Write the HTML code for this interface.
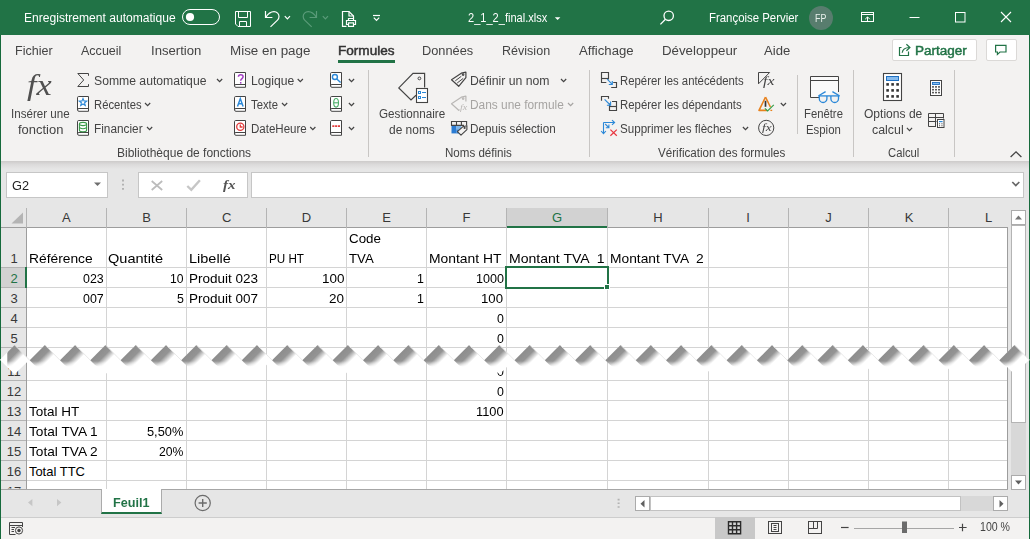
<!DOCTYPE html><html lang="fr"><head><meta charset="utf-8"><title>2_1_2_final.xlsx - Excel</title><style>
*{box-sizing:border-box;margin:0;padding:0}
html,body{width:1030px;height:539px;overflow:hidden;background:#e6e6e6;font-family:"Liberation Sans",sans-serif}
#app{position:relative;width:1030px;height:539px;overflow:hidden;background:#e6e6e6}
.abs{position:absolute}
.t{position:absolute;white-space:pre;transform-origin:0 0;font-family:"Liberation Sans",sans-serif}
#title{position:absolute;left:0;top:0;width:1030px;height:35px;background:#217346}
#tabs{position:absolute;left:0;top:35px;width:1030px;height:31px;background:#f3f2f1}
#ribbon{position:absolute;left:0;top:66px;width:1030px;height:95px;background:#f3f2f1}
#rshadow{position:absolute;left:0;top:161px;width:1030px;height:8px;background:linear-gradient(#cdcbca,#dcdbdb 45%,#e6e6e6)}
#fbar{position:absolute;left:0;top:169px;width:1030px;height:39px;background:#e6e6e6}
.box{position:absolute;background:#fff;border:1px solid #c6c6c6}
#grid{position:absolute;left:0;top:208px;width:1008px;height:281px;background:#fff;overflow:hidden}
.vl{position:absolute;width:1px;background:#d4d4d4}
.hl{position:absolute;height:1px;background:#d4d4d4}
.sep{position:absolute;width:1px;background:#c8c6c4}
#sheetbar{position:absolute;left:0;top:489px;width:1030px;height:28px;background:#e6e6e6}
#sheetbar:before{content:'';position:absolute;left:0;top:0;width:1008px;height:1px;background:#a6a6a6}
#status{position:absolute;left:0;top:517px;width:1030px;height:22px;background:#f3f2f1;border-top:1px solid #cdcdcd}
svg{position:absolute;overflow:visible}
.ov{left:0;top:0;pointer-events:none}
</style></head><body><div id="app">
<div id="title"></div><div id="tabs"></div><div id="ribbon"></div><div id="rshadow"></div><div id="fbar"></div>
<div id="grid">
<div class="abs" style="left:0;top:0;width:1008px;height:20px;background:#e6e6e6"></div>
<div class="abs" style="left:0;top:0;width:27px;height:281px;background:#e6e6e6"></div>
<div class="abs" style="left:507px;top:0;width:100px;height:20px;background:#d2d2d2;border-bottom:2px solid #217346"></div>
<div class="abs" style="left:0;top:60px;width:27px;height:19px;background:#d2d2d2;border-right:2px solid #217346"></div>
<div class="hl" style="left:0;top:19px;width:1008px;background:#9d9d9d"></div>
<div class="abs" style="left:507px;top:18px;width:100px;height:2px;background:#217346"></div>
<div class="vl" style="left:26px;top:0;height:20px;background:#b4b4b4"></div>
<div class="vl" style="left:26px;top:20px;height:261px"></div>
<div class="vl" style="left:106px;top:0;height:20px;background:#b4b4b4"></div>
<div class="vl" style="left:106px;top:20px;height:261px"></div>
<div class="vl" style="left:186px;top:0;height:20px;background:#b4b4b4"></div>
<div class="vl" style="left:186px;top:20px;height:261px"></div>
<div class="vl" style="left:266px;top:0;height:20px;background:#b4b4b4"></div>
<div class="vl" style="left:266px;top:20px;height:261px"></div>
<div class="vl" style="left:346px;top:0;height:20px;background:#b4b4b4"></div>
<div class="vl" style="left:346px;top:20px;height:261px"></div>
<div class="vl" style="left:426px;top:0;height:20px;background:#b4b4b4"></div>
<div class="vl" style="left:426px;top:20px;height:261px"></div>
<div class="vl" style="left:506px;top:0;height:20px;background:#b4b4b4"></div>
<div class="vl" style="left:506px;top:20px;height:261px"></div>
<div class="vl" style="left:607px;top:0;height:20px;background:#b4b4b4"></div>
<div class="vl" style="left:607px;top:20px;height:261px"></div>
<div class="vl" style="left:708px;top:0;height:20px;background:#b4b4b4"></div>
<div class="vl" style="left:708px;top:20px;height:261px"></div>
<div class="vl" style="left:788px;top:0;height:20px;background:#b4b4b4"></div>
<div class="vl" style="left:788px;top:20px;height:261px"></div>
<div class="vl" style="left:868px;top:0;height:20px;background:#b4b4b4"></div>
<div class="vl" style="left:868px;top:20px;height:261px"></div>
<div class="vl" style="left:948px;top:0;height:20px;background:#b4b4b4"></div>
<div class="vl" style="left:948px;top:20px;height:261px"></div>
<div class="vl" style="left:26px;top:20px;height:261px;background:#9d9d9d"></div>
<div class="hl" style="left:0;top:59px;width:26px;background:#b4b4b4"></div>
<div class="hl" style="left:27px;top:59px;width:981px"></div>
<div class="hl" style="left:0;top:79px;width:26px;background:#b4b4b4"></div>
<div class="hl" style="left:27px;top:79px;width:981px"></div>
<div class="hl" style="left:0;top:99px;width:26px;background:#b4b4b4"></div>
<div class="hl" style="left:27px;top:99px;width:981px"></div>
<div class="hl" style="left:0;top:119px;width:26px;background:#b4b4b4"></div>
<div class="hl" style="left:27px;top:119px;width:981px"></div>
<div class="hl" style="left:0;top:139px;width:26px;background:#b4b4b4"></div>
<div class="hl" style="left:27px;top:139px;width:981px"></div>
<div class="hl" style="left:0;top:172px;width:26px;background:#b4b4b4"></div>
<div class="hl" style="left:27px;top:172px;width:981px"></div>
<div class="hl" style="left:0;top:192px;width:26px;background:#b4b4b4"></div>
<div class="hl" style="left:27px;top:192px;width:981px"></div>
<div class="hl" style="left:0;top:212px;width:26px;background:#b4b4b4"></div>
<div class="hl" style="left:27px;top:212px;width:981px"></div>
<div class="hl" style="left:0;top:232px;width:26px;background:#b4b4b4"></div>
<div class="hl" style="left:27px;top:232px;width:981px"></div>
<div class="hl" style="left:0;top:252px;width:26px;background:#b4b4b4"></div>
<div class="hl" style="left:27px;top:252px;width:981px"></div>
<div class="hl" style="left:0;top:272px;width:26px;background:#b4b4b4"></div>
<div class="hl" style="left:27px;top:272px;width:981px"></div>
<div class="abs" style="left:0;top:60px;width:26px;height:19px;background:#d2d2d2"></div>
<div class="abs" style="left:25px;top:59px;width:2px;height:21px;background:#217346"></div>
<svg style="left:11px;top:4px" width="13" height="12"><path d="M12 0.5V11.5H0.5Z" fill="#b4b4b4"/></svg>
</div>
<span class="t" style="left:28.9px;top:250px;font-size:13.0px;line-height:17px;color:#000;transform:scaleX(1.062);">Référence</span>
<span class="t" style="left:108.4px;top:250px;font-size:13.0px;line-height:17px;color:#000;transform:scaleX(1.119);">Quantité</span>
<span class="t" style="left:188.8px;top:250px;font-size:13.0px;line-height:17px;color:#000;transform:scaleX(1.115);">Libellé</span>
<span class="t" style="left:269.4px;top:250px;font-size:13.0px;line-height:17px;color:#000;transform:scaleX(0.897);">PU HT</span>
<span class="t" style="left:349.3px;top:230px;font-size:13.0px;line-height:17px;color:#000;transform:scaleX(1.026);">Code</span>
<span class="t" style="left:349.3px;top:250px;font-size:13.0px;line-height:17px;color:#000;transform:scaleX(1.015);">TVA</span>
<span class="t" style="left:429.2px;top:250px;font-size:13.0px;line-height:17px;color:#000;transform:scaleX(1.066);">Montant HT</span>
<span class="t" style="left:508.9px;top:250px;font-size:13.0px;line-height:17px;color:#000;transform:scaleX(1.080);">Montant TVA  1</span>
<span class="t" style="left:610.2px;top:250px;font-size:13.0px;line-height:17px;color:#000;transform:scaleX(1.060);">Montant TVA  2</span>
<span class="t" style="left:83.2px;top:270px;font-size:13.0px;line-height:17px;color:#000;transform:scaleX(0.954);">023</span>
<span class="t" style="left:169.9px;top:270px;font-size:13.0px;line-height:17px;color:#000;transform:scaleX(0.933);">10</span>
<span class="t" style="left:189.4px;top:270px;font-size:13.0px;line-height:17px;color:#000;transform:scaleX(1.038);">Produit 023</span>
<span class="t" style="left:321.9px;top:270px;font-size:13.0px;line-height:17px;color:#000;transform:scaleX(1.037);">100</span>
<span class="t" style="left:417.0px;top:270px;font-size:13.0px;line-height:17px;color:#000;transform:scaleX(0.950);">1</span>
<span class="t" style="left:476.0px;top:270px;font-size:13.0px;line-height:17px;color:#000;transform:scaleX(0.968);">1000</span>
<span class="t" style="left:83.2px;top:290px;font-size:13.0px;line-height:17px;color:#000;transform:scaleX(0.954);">007</span>
<span class="t" style="left:177.0px;top:290px;font-size:13.0px;line-height:17px;color:#000;transform:scaleX(0.950);">5</span>
<span class="t" style="left:189.4px;top:290px;font-size:13.0px;line-height:17px;color:#000;transform:scaleX(1.038);">Produit 007</span>
<span class="t" style="left:329.4px;top:290px;font-size:13.0px;line-height:17px;color:#000;transform:scaleX(1.037);">20</span>
<span class="t" style="left:417.0px;top:290px;font-size:13.0px;line-height:17px;color:#000;transform:scaleX(0.950);">1</span>
<span class="t" style="left:481.4px;top:290px;font-size:13.0px;line-height:17px;color:#000;transform:scaleX(1.014);">100</span>
<span class="t" style="left:497.0px;top:310px;font-size:13.0px;line-height:17px;color:#000;transform:scaleX(0.950);">0</span>
<span class="t" style="left:497.0px;top:330px;font-size:13.0px;line-height:17px;color:#000;transform:scaleX(0.950);">0</span>
<span class="t" style="left:497.0px;top:363px;font-size:13.0px;line-height:17px;color:#000;transform:scaleX(0.950);">0</span>
<span class="t" style="left:497.0px;top:383px;font-size:13.0px;line-height:17px;color:#000;transform:scaleX(0.950);">0</span>
<span class="t" style="left:28.9px;top:403px;font-size:13.0px;line-height:17px;color:#000;transform:scaleX(1.039);">Total HT</span>
<span class="t" style="left:476.4px;top:403px;font-size:13.0px;line-height:17px;color:#000;transform:scaleX(0.987);">1100</span>
<span class="t" style="left:28.9px;top:423px;font-size:13.0px;line-height:17px;color:#000;transform:scaleX(1.052);">Total TVA 1</span>
<span class="t" style="left:147.1px;top:423px;font-size:13.0px;line-height:17px;color:#000;transform:scaleX(0.984);">5,50%</span>
<span class="t" style="left:28.9px;top:443px;font-size:13.0px;line-height:17px;color:#000;transform:scaleX(1.052);">Total TVA 2</span>
<span class="t" style="left:159.0px;top:443px;font-size:13.0px;line-height:17px;color:#000;transform:scaleX(0.937);">20%</span>
<span class="t" style="left:28.9px;top:463px;font-size:13.0px;line-height:17px;color:#000;transform:scaleX(1.000);">Total TTC</span>
<span class="t" style="left:56.4px;top:208px;width:20px;text-align:center;font-size:13px;line-height:20px;color:#383838">A</span>
<span class="t" style="left:136.5px;top:208px;width:20px;text-align:center;font-size:13px;line-height:20px;color:#383838">B</span>
<span class="t" style="left:216.8px;top:208px;width:20px;text-align:center;font-size:13px;line-height:20px;color:#383838">C</span>
<span class="t" style="left:296.5px;top:208px;width:20px;text-align:center;font-size:13px;line-height:20px;color:#383838">D</span>
<span class="t" style="left:376.5px;top:208px;width:20px;text-align:center;font-size:13px;line-height:20px;color:#383838">E</span>
<span class="t" style="left:456.5px;top:208px;width:20px;text-align:center;font-size:13px;line-height:20px;color:#383838">F</span>
<span class="t" style="left:547.0px;top:208px;width:20px;text-align:center;font-size:13px;line-height:20px;color:#217346">G</span>
<span class="t" style="left:648.0px;top:208px;width:20px;text-align:center;font-size:13px;line-height:20px;color:#383838">H</span>
<span class="t" style="left:738.0px;top:208px;width:20px;text-align:center;font-size:13px;line-height:20px;color:#383838">I</span>
<span class="t" style="left:818.6px;top:208px;width:20px;text-align:center;font-size:13px;line-height:20px;color:#383838">J</span>
<span class="t" style="left:899.0px;top:208px;width:20px;text-align:center;font-size:13px;line-height:20px;color:#383838">K</span>
<span class="t" style="left:978.7px;top:208px;width:20px;text-align:center;font-size:13px;line-height:20px;color:#383838">L</span>
<span class="t" style="left:2px;top:249px;width:24px;text-align:center;font-size:13px;line-height:20px;color:#383838;transform:scaleX(1.0);transform-origin:50% 0">1</span>
<span class="t" style="left:2px;top:269px;width:24px;text-align:center;font-size:13px;line-height:20px;color:#217346;transform:scaleX(1.0);transform-origin:50% 0">2</span>
<span class="t" style="left:2px;top:289px;width:24px;text-align:center;font-size:13px;line-height:20px;color:#383838;transform:scaleX(1.0);transform-origin:50% 0">3</span>
<span class="t" style="left:2px;top:309px;width:24px;text-align:center;font-size:13px;line-height:20px;color:#383838;transform:scaleX(1.0);transform-origin:50% 0">4</span>
<span class="t" style="left:2px;top:329px;width:24px;text-align:center;font-size:13px;line-height:20px;color:#383838;transform:scaleX(1.0);transform-origin:50% 0">5</span>
<span class="t" style="left:2px;top:362px;width:24px;text-align:center;font-size:13px;line-height:20px;color:#383838;transform:scaleX(1.0);transform-origin:50% 0">11</span>
<span class="t" style="left:2px;top:382px;width:24px;text-align:center;font-size:13px;line-height:20px;color:#383838;transform:scaleX(1.0);transform-origin:50% 0">12</span>
<span class="t" style="left:2px;top:402px;width:24px;text-align:center;font-size:13px;line-height:20px;color:#383838;transform:scaleX(1.0);transform-origin:50% 0">13</span>
<span class="t" style="left:2px;top:422px;width:24px;text-align:center;font-size:13px;line-height:20px;color:#383838;transform:scaleX(1.0);transform-origin:50% 0">14</span>
<span class="t" style="left:2px;top:442px;width:24px;text-align:center;font-size:13px;line-height:20px;color:#383838;transform:scaleX(1.0);transform-origin:50% 0">15</span>
<span class="t" style="left:2px;top:462px;width:24px;text-align:center;font-size:13px;line-height:20px;color:#383838;transform:scaleX(1.0);transform-origin:50% 0">16</span>
<span class="t" style="left:2px;top:482px;width:24px;text-align:center;font-size:13px;line-height:20px;color:#383838;clip-path:inset(0 0 13.5px 0);transform:scaleX(1.0);transform-origin:50% 0">17</span>
<div class="abs" style="left:505px;top:266px;width:104px;height:23px;border:2px solid #217346"></div>
<div class="abs" style="left:604px;top:284px;width:6px;height:6px;background:#217346;border:1px solid #fff"></div>
<div class="abs" style="left:1007px;top:227px;width:1px;height:263px;background:#9d9d9d"></div>
<div class="abs" style="left:1008px;top:208px;width:22px;height:282px;background:#e6e6e6"></div>
<div class="abs" style="left:1011px;top:226px;width:15px;height:250px;background:#d8d8d8"></div>
<div class="box" style="left:1011px;top:225px;width:15px;height:198px;border-color:#b4b4b4"></div>
<div class="box" style="left:1011px;top:210px;width:15px;height:15px;border-color:#ababab"></div>
<svg style="left:1015px;top:214.6px" width="8" height="5"><path d="M0 4.5L3.5 0.5L7 4.5Z" fill="#777"/></svg>
<div id="sheetbar"></div><div id="status"></div>
<div class="box" style="left:1011px;top:475px;width:15px;height:15px;border-color:#ababab"></div>
<svg style="left:1015px;top:480px" width="8" height="5"><path d="M0 0.5L3.5 4.5L7 0.5Z" fill="#606060"/></svg>
<div class="abs" style="left:101px;top:489px;width:61px;height:25px;background:#fff;border-left:1px solid #ababab;border-right:1px solid #ababab;border-bottom:2.3px solid #217346"></div>
<div class="abs" style="left:635px;top:496px;width:373px;height:15px;background:#d8d8d8"></div>
<div class="box" style="left:635px;top:496px;width:15px;height:15px;border-color:#ababab"></div>
<div class="box" style="left:650px;top:496px;width:311px;height:15px;border-color:#c2c2c2"></div>
<div class="box" style="left:993px;top:496px;width:15px;height:15px;border-color:#ababab"></div>
<svg style="left:640px;top:499.6px" width="5" height="8"><path d="M4.5 0L0.5 3.7L4.5 7.4Z" fill="#606060"/></svg>
<svg style="left:999px;top:499.6px" width="5" height="8"><path d="M0.5 0L4.5 3.7L0.5 7.4Z" fill="#606060"/></svg>
<div class="abs" style="left:715px;top:517px;width:40px;height:22px;background:#c8c8c8"></div>
<div class="box" style="left:6px;top:172px;width:102px;height:26px"></div>
<div class="box" style="left:138px;top:172px;width:110px;height:26px"></div>
<div class="box" style="left:251px;top:172px;width:773px;height:26px"></div>
<div class="abs" style="left:338px;top:60px;width:57px;height:2.5px;background:#217346"></div>
<div class="box" style="left:892px;top:38.6px;width:84.6px;height:22.8px;border-color:#dbd9d7;border-radius:2px"></div>
<div class="box" style="left:985.6px;top:38.6px;width:31px;height:22.8px;border-color:#dbd9d7;border-radius:2px"></div>
<div class="sep" style="left:368px;top:70px;height:86.5px"></div>
<div class="sep" style="left:589px;top:70px;height:86.5px"></div>
<div class="sep" style="left:797px;top:75px;height:59px"></div>
<div class="sep" style="left:853px;top:70px;height:86.5px"></div>
<div class="sep" style="left:954px;top:70px;height:86.5px"></div>
<div class="abs" style="left:809px;top:5.8px;width:24px;height:24px;border-radius:50%;background:#587d6e"></div>
<span class="t" style="left:23.7px;top:10px;font-size:12.3px;line-height:16px;color:#fff;transform:scaleX(0.982);">Enregistrement automatique</span>
<span class="t" style="left:468.4px;top:10px;font-size:12.3px;line-height:16px;color:#fff;transform:scaleX(0.899);">2_1_2_final.xlsx</span>
<span class="t" style="left:708.9px;top:10px;font-size:12.3px;line-height:16px;color:#fff;transform:scaleX(0.927);">Françoise Pervier</span>
<span class="t" style="left:814.9px;top:12px;font-size:10.4px;line-height:13px;color:#e9f0ec;transform:scaleX(0.851);">FP</span>
<span class="t" style="left:14.6px;top:43px;font-size:12.3px;line-height:16px;color:#444444;transform:scaleX(1.019);">Fichier</span>
<span class="t" style="left:80.7px;top:43px;font-size:12.3px;line-height:16px;color:#444444;transform:scaleX(1.019);">Accueil</span>
<span class="t" style="left:150.9px;top:43px;font-size:12.3px;line-height:16px;color:#444444;transform:scaleX(1.066);">Insertion</span>
<span class="t" style="left:229.7px;top:43px;font-size:12.3px;line-height:16px;color:#444444;transform:scaleX(1.090);">Mise en page</span>
<span class="t" style="left:421.9px;top:43px;font-size:12.3px;line-height:16px;color:#444444;transform:scaleX(1.040);">Données</span>
<span class="t" style="left:501.9px;top:43px;font-size:12.3px;line-height:16px;color:#444444;transform:scaleX(1.020);">Révision</span>
<span class="t" style="left:578.8px;top:43px;font-size:12.3px;line-height:16px;color:#444444;transform:scaleX(1.069);">Affichage</span>
<span class="t" style="left:661.7px;top:43px;font-size:12.3px;line-height:16px;color:#444444;transform:scaleX(1.078);">Développeur</span>
<span class="t" style="left:764.4px;top:43px;font-size:12.3px;line-height:16px;color:#444444;transform:scaleX(1.064);">Aide</span>
<span class="t" style="left:337.8px;top:43px;font-size:12.3px;line-height:16px;color:#333;transform:scaleX(1.104);-webkit-text-stroke:.45px #333;">Formules</span>
<span class="t" style="left:915.1px;top:43px;font-size:12.3px;line-height:16px;color:#217346;transform:scaleX(1.098);-webkit-text-stroke:.45px #217346;">Partager</span>
<span class="t" style="left:10.8px;top:106px;font-size:12.3px;line-height:16px;color:#444444;transform:scaleX(0.942);">Insérer une</span>
<span class="t" style="left:17.6px;top:122px;font-size:12.3px;line-height:16px;color:#444444;transform:scaleX(1.054);">fonction</span>
<span class="t" style="left:93.8px;top:73px;font-size:12.3px;line-height:16px;color:#444444;transform:scaleX(0.991);">Somme automatique</span>
<span class="t" style="left:93.8px;top:97px;font-size:12.3px;line-height:16px;color:#444444;transform:scaleX(0.916);">Récentes</span>
<span class="t" style="left:93.8px;top:121px;font-size:12.3px;line-height:16px;color:#444444;transform:scaleX(0.961);">Financier</span>
<span class="t" style="left:251.2px;top:73px;font-size:12.3px;line-height:16px;color:#444444;transform:scaleX(0.987);">Logique</span>
<span class="t" style="left:251.2px;top:97px;font-size:12.3px;line-height:16px;color:#444444;transform:scaleX(0.918);">Texte</span>
<span class="t" style="left:251.2px;top:121px;font-size:12.3px;line-height:16px;color:#444444;transform:scaleX(0.938);">DateHeure</span>
<span class="t" style="left:116.8px;top:145px;font-size:12.3px;line-height:16px;color:#444444;transform:scaleX(0.976);">Bibliothèque de fonctions</span>
<span class="t" style="left:379.2px;top:106px;font-size:12.3px;line-height:16px;color:#444444;transform:scaleX(0.949);">Gestionnaire</span>
<span class="t" style="left:389.4px;top:122px;font-size:12.3px;line-height:16px;color:#444444;transform:scaleX(0.971);">de noms</span>
<span class="t" style="left:470.2px;top:73px;font-size:12.3px;line-height:16px;color:#444444;transform:scaleX(0.994);">Définir un nom</span>
<span class="t" style="left:470.2px;top:97px;font-size:12.3px;line-height:16px;color:#a6a4a2;transform:scaleX(0.967);">Dans une formule</span>
<span class="t" style="left:470.2px;top:121px;font-size:12.3px;line-height:16px;color:#444444;transform:scaleX(0.949);">Depuis sélection</span>
<span class="t" style="left:445.0px;top:145px;font-size:12.3px;line-height:16px;color:#444444;transform:scaleX(0.941);">Noms définis</span>
<span class="t" style="left:620.2px;top:73px;font-size:12.3px;line-height:16px;color:#444444;transform:scaleX(0.923);">Repérer les antécédents</span>
<span class="t" style="left:620.2px;top:97px;font-size:12.3px;line-height:16px;color:#444444;transform:scaleX(0.927);">Repérer les dépendants</span>
<span class="t" style="left:620.2px;top:121px;font-size:12.3px;line-height:16px;color:#444444;transform:scaleX(0.944);">Supprimer les flèches</span>
<span class="t" style="left:657.6px;top:145px;font-size:12.3px;line-height:16px;color:#444444;transform:scaleX(0.945);">Vérification des formules</span>
<span class="t" style="left:804.0px;top:106px;font-size:12.3px;line-height:16px;color:#444444;transform:scaleX(0.918);">Fenêtre</span>
<span class="t" style="left:806.1px;top:122px;font-size:12.3px;line-height:16px;color:#444444;transform:scaleX(0.925);">Espion</span>
<span class="t" style="left:864.1px;top:106px;font-size:12.3px;line-height:16px;color:#444444;transform:scaleX(0.980);">Options de</span>
<span class="t" style="left:871.7px;top:122px;font-size:12.3px;line-height:16px;color:#444444;transform:scaleX(1.008);">calcul</span>
<span class="t" style="left:888.1px;top:145px;font-size:12.3px;line-height:16px;color:#444444;transform:scaleX(0.916);">Calcul</span>
<span class="t" style="left:12.4px;top:177px;font-size:13.0px;line-height:17px;color:#222;transform:scaleX(0.980);">G2</span>
<span class="t" style="left:980.4px;top:519px;font-size:12.3px;line-height:16px;color:#444444;transform:scaleX(0.860);">100 %</span>
<span class="t" style="left:113.4px;top:495px;font-size:12.3px;line-height:16px;color:#217346;transform:scaleX(1.027);font-weight:bold;">Feuil1</span>
<span class="t" style="left:27.1px;top:68px;font-size:29px;line-height:34px;color:#505050;transform:scaleX(1.180);font-family:'Liberation Serif',serif;font-style:italic;">fx</span>
<span class="t" style="left:222.7px;top:176px;font-size:13.5px;line-height:17px;color:#555;transform:scaleX(1.111);font-family:'Liberation Serif',serif;font-style:italic;font-weight:bold;">fx</span>
<span class="t" style="left:763.0px;top:72px;font-size:13px;line-height:17px;color:#444;transform:scaleX(1.214);font-family:'Liberation Serif',serif;font-style:italic;">fx</span>
<span class="t" style="left:762.0px;top:121px;font-size:10.5px;line-height:13px;color:#444;transform:scaleX(1.267);font-family:'Liberation Serif',serif;font-style:italic;">fx</span>
<span class="t" style="left:459.7px;top:101px;font-size:9px;line-height:12px;color:#b9b7b5;transform:scaleX(1.123);font-family:'Liberation Serif',serif;font-style:italic;">fx</span>
<svg class="ov" width="1030" height="539" viewBox="0 0 1030 539" fill="none" stroke-linecap="butt" stroke-linejoin="miter"><g stroke="#fff" stroke-width="1" fill="none"><rect x="182.5" y="9.5" width="37" height="15" rx="7.5"/><circle cx="190" cy="17" r="4.1" fill="#fff" stroke="none"/><path d="M235.5 11.5H250.5V26.5H238L235.5 24Z"/><path d="M238.5 11.5V17.5H247.5V11.5"/><path d="M239.5 26.5V21.5H246.5V26.5"/><g stroke-width="1.2"><path d="M265.5 11V17.5H272.4"/><path d="M265.8 17.4C268 13.6 271 11.6 274 11.6C277 11.6 279 14 279 16.4C279 18 278.4 19.2 277.5 20.1L270.5 26.9"/></g><path d="M284.8 16.2L287.4 18.9L290.0 16.2" stroke="#fff" stroke-width="1.2" fill="none"/><g stroke="#5a9b79" stroke-width="1.2"><path d="M316.5 11V17.5H309.6"/><path d="M316.4 17.4C314.2 13.6 311.2 11.6 308.2 11.6C305.2 11.6 303.2 14 303.2 16.4C303.2 18 303.8 19.2 304.7 20.1L311.7 26.9"/></g><path d="M322.8 16.2L325.4 18.9L328.0 16.2" stroke="#5a9b79" stroke-width="1.2" fill="none"/><g stroke-width="1.2"><path d="M346.5 26.4H342.5V11.5H349L353.5 16V18.5"/><path d="M349 11.5V16H353.5" /><path d="M348.5 24.5H346.5V20.5H355.5V24.5H353.5"/><path d="M348.5 20.5V18.5H353.5V20.5"/><rect x="348.5" y="22.9" width="5" height="3.5"/></g><path d="M373 15.5H380" stroke-width="1.2"/><path d="M373.8 17.6L376.5 20.4L379.2 17.6" stroke="#fff" stroke-width="1.2" fill="none"/><path d="M554.8 17.3H560.4L557.6 20.1Z" fill="#fff" stroke="none"/><g stroke-width="1.3"><circle cx="668.7" cy="15.8" r="4.7"/><path d="M665.4 19.2L660.4 24.4"/></g><rect x="861.5" y="12.5" width="12" height="9"/><path d="M861.5 14.5H873.5"/><path d="M867.5 21.5V17M865.2 19.2L867.5 16.9L869.8 19.2"/><path d="M909.5 17.5H919.5"/><rect x="955.5" y="12.5" width="9.5" height="9.5"/><path d="M1001 12L1011 22M1011 12L1001 22" stroke-width="1.1"/></g><g stroke="#217346" stroke-width="1.2" fill="none"><path d="M901.5 47.5H899.5V55.5H908.5V51.5"/><path d="M902.2 52.8C902.6 49.5 905 47.6 909.6 47.5"/><path d="M906.4 44.3L909.9 47.5L906.4 50.7"/><path d="M995.6 45.4H1006V52H1000L997.4 54.4V52H995.6Z"/></g><path d="M88.5 75.8V73.5H77.8L83.7 80L77.8 86.5H88.5V84.2" stroke="#444444" stroke-width="1"/><g transform="translate(77.0 96.0)" stroke="#444444" stroke-width="1"><path d="M1.7 .5H11.5V15.3H2A1.5 1.5 0 0 1 .5 13.8V1.7A1.2 1.2 0 0 1 1.7 .5Z" fill="#fff"/><path d="M.5 13.8A1.5 1.5 0 0 1 2 12.5H11.5"/></g><g transform="translate(77.0 120.0)" stroke="#444444" stroke-width="1"><path d="M1.7 .5H11.5V15.3H2A1.5 1.5 0 0 1 .5 13.8V1.7A1.2 1.2 0 0 1 1.7 .5Z" fill="#fff"/><path d="M.5 13.8A1.5 1.5 0 0 1 2 12.5H11.5"/></g><g transform="translate(234.0 72.0)" stroke="#444444" stroke-width="1"><path d="M1.7 .5H11.5V15.3H2A1.5 1.5 0 0 1 .5 13.8V1.7A1.2 1.2 0 0 1 1.7 .5Z" fill="#fff"/><path d="M.5 13.8A1.5 1.5 0 0 1 2 12.5H11.5"/></g><g transform="translate(330.0 72.0)" stroke="#444444" stroke-width="1"><path d="M1.7 .5H11.5V15.3H2A1.5 1.5 0 0 1 .5 13.8V1.7A1.2 1.2 0 0 1 1.7 .5Z" fill="#fff"/><path d="M.5 13.8A1.5 1.5 0 0 1 2 12.5H11.5"/></g><g transform="translate(234.0 96.0)" stroke="#444444" stroke-width="1"><path d="M1.7 .5H11.5V15.3H2A1.5 1.5 0 0 1 .5 13.8V1.7A1.2 1.2 0 0 1 1.7 .5Z" fill="#fff"/><path d="M.5 13.8A1.5 1.5 0 0 1 2 12.5H11.5"/></g><g transform="translate(330.0 96.0)" stroke="#444444" stroke-width="1"><path d="M1.7 .5H11.5V15.3H2A1.5 1.5 0 0 1 .5 13.8V1.7A1.2 1.2 0 0 1 1.7 .5Z" fill="#fff"/><path d="M.5 13.8A1.5 1.5 0 0 1 2 12.5H11.5"/></g><g transform="translate(234.0 120.0)" stroke="#444444" stroke-width="1"><path d="M1.7 .5H11.5V15.3H2A1.5 1.5 0 0 1 .5 13.8V1.7A1.2 1.2 0 0 1 1.7 .5Z" fill="#fff"/><path d="M.5 13.8A1.5 1.5 0 0 1 2 12.5H11.5"/></g><g transform="translate(330.0 120.0)" stroke="#444444" stroke-width="1"><path d="M1.7 .5H11.5V15.3H2A1.5 1.5 0 0 1 .5 13.8V1.7A1.2 1.2 0 0 1 1.7 .5Z" fill="#fff"/><path d="M.5 13.8A1.5 1.5 0 0 1 2 12.5H11.5"/></g><polygon points="83.0,98.4 84.0,100.9 86.7,101.1 84.6,102.8 85.3,105.5 83.0,104.0 80.7,105.5 81.4,102.8 79.3,101.1 82.0,100.9" stroke="#2b88d8" stroke-width="1.1" fill="none"/><g stroke="#3c9a4b" stroke-width="1.1"><ellipse cx="83" cy="124" rx="3.6" ry="1.6"/><path d="M79.4 124V130.2A3.6 1.6 0 0 0 86.6 130.2V124"/><path d="M79.4 127.1A3.6 1.6 0 0 0 86.6 127.1"/></g><g stroke="#a33fc4" stroke-width="1.5"><path d="M238.4 76.8C238.5 75.3 239.5 74.7 240.7 74.7C242 74.7 243.1 75.5 243.1 76.8C243.1 78.6 240.7 78.7 240.7 80.8"/><path d="M240.7 82V83.6"/></g><path d="M237.5 106.4L240.3 98.6L243.1 106.4M238.5 103.8H242.1" stroke="#2b88d8" stroke-width="1.5"/><g stroke="#e13b3b" stroke-width="1.3"><circle cx="240.3" cy="126.8" r="3.6"/><path d="M240.3 124.4V127H242.6"/></g><g stroke="#2b88d8" stroke-width="1.4"><circle cx="334.9" cy="77" r="2.5"/><path d="M336.8 79L340.6 82.6"/></g><g stroke="#4caf6a" stroke-width="1.1"><ellipse cx="336.1" cy="102.8" rx="2.4" ry="4.3"/><path d="M333.7 102.8H338.5"/></g><path d="M332.3 126.1H334.4M335.1 126.1H337.2M337.9 126.1H340" stroke="#e13b3b" stroke-width="1.9"/><path d="M217.0 79.0L219.6 81.7L222.2 79.0" stroke="#444444" stroke-width="1.2" fill="none"/><path d="M145.0 103.0L147.6 105.7L150.2 103.0" stroke="#444444" stroke-width="1.2" fill="none"/><path d="M147.0 127.0L149.6 129.7L152.2 127.0" stroke="#444444" stroke-width="1.2" fill="none"/><path d="M297.7 79.0L300.3 81.7L302.9 79.0" stroke="#444444" stroke-width="1.2" fill="none"/><path d="M282.0 103.0L284.6 105.7L287.2 103.0" stroke="#444444" stroke-width="1.2" fill="none"/><path d="M310.2 127.0L312.8 129.7L315.4 127.0" stroke="#444444" stroke-width="1.2" fill="none"/><path d="M348.9 79.0L351.5 81.7L354.1 79.0" stroke="#444444" stroke-width="1.2" fill="none"/><path d="M348.9 103.0L351.5 105.7L354.1 103.0" stroke="#444444" stroke-width="1.2" fill="none"/><path d="M348.9 127.0L351.5 129.7L354.1 127.0" stroke="#444444" stroke-width="1.2" fill="none"/><path d="M561.0 79.0L563.6 81.7L566.2 79.0" stroke="#444444" stroke-width="1.2" fill="none"/><path d="M742.9 127.0L745.5 129.7L748.1 127.0" stroke="#444444" stroke-width="1.2" fill="none"/><path d="M780.8 103.0L783.4 105.7L786.0 103.0" stroke="#444444" stroke-width="1.2" fill="none"/><path d="M906.9 127.9L909.5 130.6L912.1 127.9" stroke="#444444" stroke-width="1.2" fill="none"/><path d="M568.0 103.0L570.6 105.7L573.2 103.0" stroke="#a6a4a2" stroke-width="1.2" fill="none"/><path d="M1010.6 157L1016 151.8L1021.4 157" stroke="#444444" stroke-width="1.3"/><g stroke="#444444" stroke-width="1.2"><path d="M416 95.3L411 100L398.8 87.9L413 73.4H424.6V87.6"/><circle cx="419.4" cy="78.4" r="1.4" stroke-width="1"/><rect x="416.5" y="88.5" width="11" height="14" fill="#fff" stroke-width="1.1"/></g><g stroke="#2b88d8" stroke-width="1"><rect x="418.5" y="91.5" width="2" height="2"/><rect x="418.5" y="96.5" width="2" height="2"/><path d="M422 92.5H426M422 97.5H426"/></g><g stroke="#444444" stroke-width="1.1"><path d="M451.5 79.8L461.3 73.2L465.9 72.2V77.6L458.7 86.3Z" stroke-linejoin="round" stroke-width="1.2"/><circle cx="463.1" cy="74.6" r=".8"/><path d="M455.3 80.8L461.3 76.3M457.2 83L463.2 78.4" stroke-width="1"/></g><g stroke="#b9b7b5" stroke-width="1.1"><path d="M459.6 109.6L458.7 110.3L451.5 103.8L461.3 97.2L465.9 96.2V101.6" stroke-linejoin="round" stroke-width="1.2"/><circle cx="463.1" cy="98.6" r=".8"/></g><rect x="451.5" y="125.4" width="5" height="8" fill="#2b7cd3" stroke="none"/><rect x="456.5" y="125.4" width="4.8" height="4.1" fill="#7fb5e9" stroke="none"/><rect x="456.5" y="129.5" width="3" height="4" fill="#2b7cd3" stroke="none"/><g stroke="#444444" stroke-width="1.1"><path d="M451.5 126V121.5H466.6V125.4"/><path d="M451.5 125.4H464M456.5 121.5V125.4M461.4 121.5V125.4"/><path d="M457.4 131.6L462.7 126.8L466.9 125.7V129.6L461 135.2Z" fill="#f3f2f1" stroke-linejoin="round"/><circle cx="464.6" cy="127.9" r=".5"/></g><g stroke="#444444" stroke-width="1.15"><path d="M606.3 82.5H601.5V72.5H608.5V79.5"/><path d="M601.5 78.5H608.5"/><path d="M611.2 87.5H616.5V82.5H613.2"/></g><g stroke="#2b88d8" stroke-width="1.1"><path d="M607.2 79.2L612 84.2"/><path d="M612.3 81V84.5H608.8"/></g><g stroke="#444444" stroke-width="1.15"><path d="M601.5 100.8V96.5H608.5V98.8"/><path d="M612 101.5H616.5V110.5H609.5V103.5"/><path d="M609.5 106.5H616.5"/></g><g stroke="#2b88d8" stroke-width="1.1"><path d="M604.6 99.4L610.2 105"/><path d="M610.6 101.6V105.3H606.9"/></g><g stroke="#2b88d8" stroke-width="1.1"><path d="M603.5 122.5V133.6M601.1 131L603.5 133.6L605.9 131"/><path d="M603.5 122.5H614.6M612 120.1L614.6 122.5L612 124.9"/><path d="M605.2 124L608.6 127.4M608.9 124.6V127.7H605.8"/></g><path d="M610.4 129.6L616.8 135.8M616.8 129.6L610.4 135.8" stroke="#e8363f" stroke-width="1.2"/><path d="M769.6 72.5H758.5V83.8Z" stroke="#444444" stroke-width="1" stroke-linejoin="miter"/><path d="M765.5 97.2L759 110.4H767" stroke="#e8821e" stroke-width="1.6" stroke-linejoin="round"/><path d="M765.5 97.2L770.4 107" stroke="#e8821e" stroke-width="1.6"/><path d="M770.4 110.4H772.2" stroke="#e8821e" stroke-width="1.3"/><path d="M765.5 100.8V106.8" stroke="#333" stroke-width="1.7"/><path d="M764.9 108.4L767.6 111L773.8 104.9" stroke="#36a04b" stroke-width="1.2"/><circle cx="766.2" cy="127.9" r="7.6" stroke="#444444" stroke-width="1"/><path d="M819 97.5H810.5V76.5H838.5V92" stroke="#444444" stroke-width="1" fill="#fafafa"/><path d="M810.5 80.5H838.5" stroke="#444444" stroke-width="1"/><g stroke="#2b88d8" stroke-width="1.3"><path d="M818.4 95.9H839.6"/><path d="M819.3 96V98.7A3.8 3.8 0 0 0 826.9 98.7V96"/><path d="M830.9 96V98.7A3.8 3.8 0 0 0 838.5 98.7V96"/><path d="M818.6 95.7L825.6 91.6M839.4 95.7L832.4 91.6"/></g><rect x="883.5" y="73.5" width="18" height="27" fill="#fff" stroke="#444444" stroke-width="1.1"/><rect x="886.5" y="76.5" width="12" height="4" fill="#86bbee" stroke="#1f70c1" stroke-width="1"/><rect x="886.3" y="83.1" width="2.6" height="2.6" fill="#333" stroke="none"/><rect x="886.3" y="89.1" width="2.6" height="2.6" fill="#333" stroke="none"/><rect x="886.3" y="95.1" width="2.6" height="2.6" fill="#333" stroke="none"/><rect x="891.3" y="83.1" width="2.6" height="2.6" fill="#333" stroke="none"/><rect x="891.3" y="89.1" width="2.6" height="2.6" fill="#333" stroke="none"/><rect x="891.3" y="95.1" width="2.6" height="2.6" fill="#333" stroke="none"/><rect x="896.3" y="83.1" width="2.6" height="2.6" fill="#333" stroke="none"/><rect x="896.3" y="89.1" width="2.6" height="2.6" fill="#333" stroke="none"/><rect x="896.3" y="95.1" width="2.6" height="2.6" fill="#333" stroke="none"/><rect x="930.5" y="80.5" width="11" height="15" fill="#fff" stroke="#444444" stroke-width="1"/><rect x="932.5" y="82.5" width="7" height="2" fill="#86bbee" stroke="#1f70c1" stroke-width=".9"/><rect x="932.2" y="86.1" width="1.6" height="1.6" fill="#333" stroke="none"/><rect x="932.2" y="88.9" width="1.6" height="1.6" fill="#333" stroke="none"/><rect x="932.2" y="91.8" width="1.6" height="1.6" fill="#333" stroke="none"/><rect x="935.2" y="86.1" width="1.6" height="1.6" fill="#333" stroke="none"/><rect x="935.2" y="88.9" width="1.6" height="1.6" fill="#333" stroke="none"/><rect x="935.2" y="91.8" width="1.6" height="1.6" fill="#333" stroke="none"/><rect x="938.2" y="86.1" width="1.6" height="1.6" fill="#333" stroke="none"/><rect x="938.2" y="88.9" width="1.6" height="1.6" fill="#333" stroke="none"/><rect x="938.2" y="91.8" width="1.6" height="1.6" fill="#333" stroke="none"/><g stroke="#444444" stroke-width="1"><path d="M936 126.5H928.5V113.5H943.5V118.5"/><path d="M928.5 117.5H943.5M928.5 121.5H936.5M935.5 113.5V126.5"/><rect x="937.5" y="119.5" width="6.5" height="8" fill="#fff"/></g><path d="M939 121.6H942.6" stroke="#2b88d8" stroke-width="1.2"/><path d="M939 123.8H940.1M941.4 123.8H942.5M939 125.8H940.1M941.4 125.8H942.5" stroke="#444" stroke-width="1"/><path d="M94 182.4H101L97.5 185.9Z" fill="#6e6e6e"/><path d="M122 180.5H124M122 184.6H124M122 188.9H124" stroke="#b2b2b2" stroke-width="1.8"/><path d="M151.7 181L162.2 190M162.2 181L151.7 190" stroke="#bcbcbc" stroke-width="1.7"/><path d="M187.3 186L191.3 189.8L199.9 180.3" stroke="#c6c6c6" stroke-width="2.4"/><path d="M1012.3 182L1015.8 185.6L1019.3 182" stroke="#666" stroke-width="1.7"/><path d="M32.4 499V506.2L28 502.6Z" fill="#c6c6c6"/><path d="M57 499V506.2L61.4 502.6Z" fill="#c6c6c6"/><circle cx="202.7" cy="503" r="7.6" stroke="#6b6b6b" stroke-width="1.2"/><path d="M198.6 503H206.8M202.7 498.9V507.1" stroke="#6b6b6b" stroke-width="1.4"/><path d="M617.6 499.6H619.6M617.6 503.3H619.6M617.6 507H619.6" stroke="#b2b2b2" stroke-width="1.6"/><g stroke="#444" stroke-width="1"><path d="M15.5 534.5H9.5V522.5H22.5V527"/><path d="M9.5 525.5H22.5"/><path d="M11.5 527.5H15M11.5 529.5H14M11.5 531.5H14" stroke-width="1"/><circle cx="19" cy="530.5" r="3.6" fill="#f3f2f1"/><circle cx="19" cy="530.5" r="1.7" fill="#444" stroke="none"/></g><rect x="728.5" y="521.5" width="12" height="12" fill="#d2d2d2" stroke="none"/><path d="M728.5 521.7H740.6V533.7H728.5ZM732.5 521.7V533.7M736.6 521.7V533.7M728.5 525.7H740.6M728.5 529.7H740.6" stroke="#2a2a2a" stroke-width="1.4"/><g stroke="#444" stroke-width="1"><rect x="768.5" y="521.5" width="13" height="12"/><rect x="771.5" y="523.5" width="7" height="8"/><path d="M773.5 525.5H776.5M773.5 527.5H776.5M773.5 529.5H776.5" stroke-width="1"/></g><g stroke="#444" stroke-width="1"><rect x="808.5" y="521.5" width="13" height="12"/><path d="M808.5 528.5H817.5V521.5M813.5 521.5V528.5"/></g><path d="M841 527.5H848.6" stroke="#444" stroke-width="1.2"/><path d="M854 528.5H954" stroke="#a6a6a6" stroke-width="1"/><rect x="902" y="521.5" width="5" height="11.5" fill="#6b6b6b"/><path d="M959 527.5H966.6M962.5 523.7V531.3" stroke="#444" stroke-width="1.2"/></svg>
<div class="abs" style="left:0;top:35px;width:1.2px;height:504px;background:#166a3c"></div>
<div class="abs" style="left:1028.8px;top:35px;width:1.2px;height:504px;background:#166a3c"></div>
<svg class="ov" width="1030" height="539" viewBox="0 0 1030 539">
<defs><linearGradient id="tg" x1="0" y1="0" x2="9.4" y2="9.4" gradientUnits="userSpaceOnUse"><stop offset="0" stop-color="#8d8d8d"/><stop offset=".5" stop-color="#949494"/><stop offset="1" stop-color="#fff"/></linearGradient>
<linearGradient id="tv" x1="0" y1="16" x2="0" y2="22" gradientUnits="userSpaceOnUse"><stop offset="0" stop-color="#fff"/><stop offset="1" stop-color="#000"/></linearGradient>
<mask id="tm" maskUnits="userSpaceOnUse" x="-20" y="-2" width="40" height="30"><rect x="-20" y="-2" width="40" height="30" fill="url(#tv)"/></mask>
<g id="pk"><path d="M-15.2 15.3L0 0L9.4 9.4L-2 20.8Q-5 22.6 -8.5 21.2Q-10.5 20.2 -15.2 15.3Z" fill="url(#tg)" mask="url(#tm)"/><path d="M0.3 0.3L15.1 15.2" stroke="#e3e3e3" stroke-width=".8" fill="none"/></g></defs>
<polygon points="-30.9,360.3 -15.7,344.9 -0.6,360.3 14.6,344.9 29.8,360.3 44.9,344.9 60.1,360.3 75.2,344.9 90.3,360.3 105.5,344.9 120.7,360.3 135.8,344.9 150.9,360.3 166.1,344.9 181.2,360.3 196.4,344.9 211.5,360.3 226.7,344.9 241.8,360.3 257.0,344.9 272.2,360.3 287.3,344.9 302.5,360.3 317.6,344.9 332.8,360.3 347.9,344.9 363.1,360.3 378.2,344.9 393.4,360.3 408.5,344.9 423.7,360.3 438.8,344.9 454.0,360.3 469.1,344.9 484.3,360.3 499.4,344.9 514.6,360.3 529.7,344.9 544.9,360.3 560.0,344.9 575.2,360.3 590.3,344.9 605.5,360.3 620.6,344.9 635.8,360.3 650.9,344.9 666.1,360.3 681.2,344.9 696.4,360.3 711.5,344.9 726.7,360.3 741.8,344.9 757.0,360.3 772.1,344.9 787.3,360.3 802.4,344.9 817.6,360.3 832.7,344.9 847.9,360.3 863.0,344.9 878.2,360.3 893.3,344.9 908.5,360.3 923.6,344.9 938.8,360.3 953.9,344.9 969.1,360.3 984.2,344.9 999.4,360.3 1014.5,344.9 1029.6,360.3 1044.8,344.9 1060.0,360.3 1060.0,359.5 1044.8,374.3 1029.6,359.5 1014.5,374.3 999.4,359.5 984.2,374.3 969.1,359.5 953.9,374.3 938.8,359.5 923.6,374.3 908.5,359.5 893.3,374.3 878.2,359.5 863.0,374.3 847.9,359.5 832.7,374.3 817.6,359.5 802.4,374.3 787.3,359.5 772.1,374.3 757.0,359.5 741.8,374.3 726.7,359.5 711.5,374.3 696.4,359.5 681.2,374.3 666.1,359.5 650.9,374.3 635.8,359.5 620.6,374.3 605.5,359.5 590.3,374.3 575.2,359.5 560.0,374.3 544.9,359.5 529.7,374.3 514.6,359.5 499.4,374.3 484.3,359.5 469.1,374.3 454.0,359.5 438.8,374.3 423.7,359.5 408.5,374.3 393.4,359.5 378.2,374.3 363.1,359.5 347.9,374.3 332.8,359.5 317.6,374.3 302.5,359.5 287.3,374.3 272.2,359.5 257.0,374.3 241.8,359.5 226.7,374.3 211.5,359.5 196.4,374.3 181.2,359.5 166.1,374.3 150.9,359.5 135.8,374.3 120.7,359.5 105.5,374.3 90.3,359.5 75.2,374.3 60.1,359.5 44.9,374.3 29.8,359.5 14.6,374.3 -0.6,359.5 -15.7,374.3 -30.9,359.5" fill="#fff"/>
<clipPath id="tc"><rect x="7.3" y="340" width="1030" height="40"/></clipPath><g clip-path="url(#tc)">
<use href="#pk" x="-15.7" y="345"/>
<use href="#pk" x="14.6" y="345"/>
<use href="#pk" x="44.9" y="345"/>
<use href="#pk" x="75.2" y="345"/>
<use href="#pk" x="105.5" y="345"/>
<use href="#pk" x="135.8" y="345"/>
<use href="#pk" x="166.1" y="345"/>
<use href="#pk" x="196.4" y="345"/>
<use href="#pk" x="226.7" y="345"/>
<use href="#pk" x="257.0" y="345"/>
<use href="#pk" x="287.3" y="345"/>
<use href="#pk" x="317.6" y="345"/>
<use href="#pk" x="347.9" y="345"/>
<use href="#pk" x="378.2" y="345"/>
<use href="#pk" x="408.5" y="345"/>
<use href="#pk" x="438.8" y="345"/>
<use href="#pk" x="469.1" y="345"/>
<use href="#pk" x="499.4" y="345"/>
<use href="#pk" x="529.7" y="345"/>
<use href="#pk" x="560.0" y="345"/>
<use href="#pk" x="590.3" y="345"/>
<use href="#pk" x="620.6" y="345"/>
<use href="#pk" x="650.9" y="345"/>
<use href="#pk" x="681.2" y="345"/>
<use href="#pk" x="711.5" y="345"/>
<use href="#pk" x="741.8" y="345"/>
<use href="#pk" x="772.1" y="345"/>
<use href="#pk" x="802.4" y="345"/>
<use href="#pk" x="832.7" y="345"/>
<use href="#pk" x="863.0" y="345"/>
<use href="#pk" x="893.3" y="345"/>
<use href="#pk" x="923.6" y="345"/>
<use href="#pk" x="953.9" y="345"/>
<use href="#pk" x="984.2" y="345"/>
<use href="#pk" x="1014.5" y="345"/>
<use href="#pk" x="1044.8" y="345"/>
</g>
</svg>
</div></body></html>
